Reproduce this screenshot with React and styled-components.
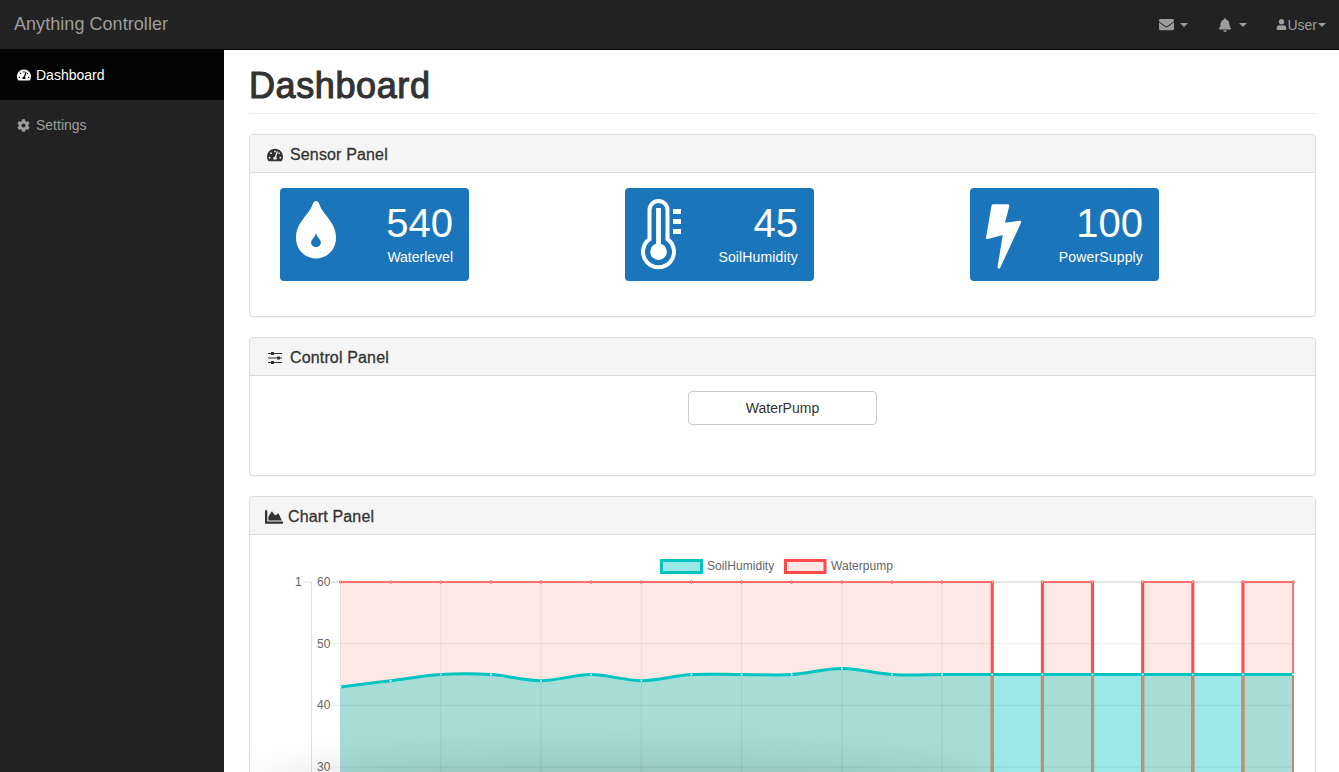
import React from "react";
import styled, { createGlobalStyle } from "styled-components";
import {
  FaBell,
  FaChartArea,
  FaCog,
  FaEnvelope,
  FaTachometerAlt,
  FaUser,
} from "react-icons/fa";

const GlobalStyle = createGlobalStyle`
  html, body {
    margin: 0;
    height: 100%;
    overflow: hidden;
    background: #fff;
  }
  body {
    font-family: "Liberation Sans", Arial, sans-serif;
    font-size: 14px;
    color: #333;
  }
  * { box-sizing: border-box; }
`;

const Page = styled.div`
  height: 100vh;
  display: flex;
  flex-direction: column;
  overflow: hidden;
  position: relative;
`;
const Navbar = styled.header`
  flex: none;
  height: 50px;
  background: #222;
  border-bottom: 1px solid #080808;
  display: flex;
  align-items: center;
  justify-content: space-between;
  padding: 0 13px 0 14px;
`;
const Brand = styled.div`
  font-size: 18px;
  letter-spacing: 0.05px;
  color: #9d9d9d;
`;
const NavRight = styled.div`
  display: flex;
  align-items: center;
  color: #9d9d9d;
`;
const NavItem = styled.div`
  display: flex;
  align-items: center;
  margin-left: ${(p) => p.$gap}px;
  svg { display: block; }
`;
const Caret = styled.span`
  width: 0;
  height: 0;
  margin-left: ${(p) => p.$gap}px;
  border-top: 4px solid #9d9d9d;
  border-left: 4px solid transparent;
  border-right: 4px solid transparent;
`;
const Body = styled.div`
  flex: 1;
  display: flex;
  min-height: 0;
`;
const Sidebar = styled.nav`
  flex: none;
  width: 224px;
  background: #222;
`;
const SideLink = styled.div`
  height: 50px;
  display: flex;
  align-items: center;
  gap: ${(p) => (p.$active ? 5 : 6)}px;
  padding-left: 17px;
  background: ${(p) => (p.$active ? "#040404" : "transparent")};
  color: ${(p) => (p.$active ? "#fff" : "#9d9d9d")};
`;
const Main = styled.main`
  flex: 1;
  padding: 0 23px 0 25px;
  min-width: 0;
`;
const PageHeader = styled.div`
  height: 64px;
  border-bottom: 1px solid #eee;
  margin-bottom: 20px;
  padding-top: 16px;
`;
const Title = styled.h1`
  margin: 0;
  font-size: 36px;
  line-height: 40px;
  font-weight: 400;
  letter-spacing: 0.6px;
  -webkit-text-stroke: 1.1px #333;
`;
const Panel = styled.section`
  background: #fff;
  border: 1px solid #ddd;
  border-radius: 4px;
  margin-bottom: 20px;
  box-shadow: 0 1px 1px rgba(0, 0, 0, 0.05);
`;
const PanelHeading = styled.div`
  height: 38px;
  background: #f5f5f5;
  border-bottom: 1px solid #ddd;
  border-radius: 3px 3px 0 0;
  display: flex;
  align-items: center;
  gap: ${(p) => p.$gap}px;
  padding: 2px 0 0 ${(p) => p.$pad}px;
  font-size: 16px;
  letter-spacing: 0.15px;
  -webkit-text-stroke: 0.3px #333;
  color: #333;
`;
const SensorBody = styled.div`
  padding: 15px 30px 35px;
  display: grid;
  grid-template-columns: repeat(3, 345px);
`;
const SensorCard = styled.div`
  width: 189px;
  height: 93px;
  background: #1b75bb;
  border-radius: 4px;
  color: #fff;
  display: flex;
  justify-content: space-between;
  padding: 11px 16px 0;
`;
const SensorIcon = styled.svg`
  display: block;
  fill: #fff;
  margin-top: ${(p) => p.$top}px;
`;
const SensorText = styled.div`
  text-align: right;
`;
const SensorValue = styled.div`
  font-size: 40px;
  line-height: 48px;
`;
const SensorLabel = styled.div`
  font-size: 14px;
  line-height: 20px;
  letter-spacing: ${(p) => p.$spacing}px;
`;
const ControlBody = styled.div`
  height: 99px;
  padding-top: 15px;
  display: flex;
  justify-content: center;
`;
const PumpButton = styled.button`
  width: 189px;
  height: 34px;
  background: #fff;
  border: 1px solid #ccc;
  border-radius: 4px;
  font: inherit;
  color: #333;
`;
const ChartBody = styled.div`
  height: 560px;
  svg { display: block; }
`;
const BottomShade = styled.div`
  position: absolute;
  left: 255px;
  bottom: -52px;
  width: 730px;
  height: 66px;
  border-radius: 50%;
  background: rgba(0, 0, 0, 0.11);
  filter: blur(20px);
  pointer-events: none;
`;

const OX = 250;
const OY = 535;
const xAt = (i) => 340.5 + i * 50.135;
const yAt = (v) => 582 + (60 - v) * 6.17;
const soil = [43, 44, 45, 45, 44, 45, 44, 45, 45, 45, 46, 45, 45, 45, 45, 45, 45, 45, 45, 45];

// same smoothing as the chart's bezier curve, offsets are panel relative
const soilPath = () => {
  const pts = soil.map((v, i) => [xAt(i) - OX, yAt(v) - OY]);
  let d = `M${pts[0][0]} ${pts[0][1]}`;
  for (let i = 1; i < pts.length; i++) {
    const p0 = pts[Math.max(i - 2, 0)];
    const p1 = pts[i - 1];
    const p2 = pts[i];
    const p3 = pts[Math.min(i + 1, pts.length - 1)];
    const c1x = p1[0] + (p2[0] - p0[0]) / 6;
    const c1y = p1[1] + (p2[1] - p0[1]) / 6;
    const c2x = p2[0] - (p3[0] - p1[0]) / 6;
    const c2y = p2[1] - (p3[1] - p1[1]) / 6;
    d += ` C${c1x} ${c1y} ${c2x} ${c2y} ${p2[0]} ${p2[1]}`;
  }
  return d;
};

const labelStyle = {
  fontFamily: "'Liberation Sans', Arial, sans-serif",
  fontSize: 12,
  letterSpacing: 0.05,
  fill: "#666",
};

const Chart = () => {
  const top = yAt(60) - OY;
  const bottom = 900 - OY;
  const left = xAt(0) - OX;
  const right = xAt(19) - OX;
  const line = soilPath();
  const area = `${line} L${right} ${bottom} L${left} ${bottom} Z`;
  const pumpBlocks = [
    [xAt(0), xAt(13)],
    [xAt(14), xAt(15)],
    [xAt(16), xAt(17)],
    [xAt(18), xAt(19)],
  ];
  const edges = [13, 14, 15, 16, 17, 18].map(xAt);
  const pumpRects = (fill) =>
    pumpBlocks.map(([a, b]) => (
      <rect key={a} x={a - OX} y={top} width={b - a} height={bottom - top} fill={fill} />
    ));
  const pumpEdges = (stroke) => (
    <g fill="none" stroke={stroke}>
      {edges.map((x) => (
        <line key={x} x1={x - OX} x2={x - OX} y1={top} y2={bottom} strokeWidth="3" />
      ))}
      <line x1={right} x2={right} y1={top} y2={bottom} strokeWidth="1.5" />
    </g>
  );
  return (
    <svg width="1065" height="560">
      <defs>
        <clipPath id="soil-area">
          <path d={area} />
        </clipPath>
      </defs>
      <line x1={331 - OX} x2={right + 1} y1={top} y2={top} stroke="#ccc" />
      {pumpRects("#fde8e5")}
      <path d={area} fill="#9be8e8" />
      <g clipPath="url(#soil-area)">{pumpRects("#a6ddd7")}</g>
      {/* grid */}
      <g stroke="rgba(0,0,0,0.07)" strokeWidth="1">
        {[50, 40, 30].map((v) => (
          <line key={v} x1={331 - OX} x2={right + 1} y1={yAt(v) - OY} y2={yAt(v) - OY} />
        ))}
        <line x1={304 - OX} x2={311.5 - OX} y1={top} y2={top} stroke="#e0e0e0" />
        <line x1={311.5 - OX} x2={311.5 - OX} y1={top} y2={bottom} stroke="#e0e0e0" />
        {Array.from({ length: 7 }, (_, i) => xAt(i * 2)).map((x) => (
          <line key={x} x1={x - OX} x2={x - OX} y1={top} y2={bottom} />
        ))}
      </g>
      {/* pump outline, brown where it runs under the soil area */}
      {pumpBlocks.map(([a, b]) => (
        <line key={a} x1={a - OX} x2={b - OX} y1={top} y2={top} stroke="#ff4a4a" strokeWidth="1.5" />
      ))}
      {pumpEdges("#ff4a4a")}
      <g clipPath="url(#soil-area)">{pumpEdges("#b8966f")}</g>
      <path d={line} fill="none" stroke="#00c4c0" strokeWidth="3" />
      {soil.map((v, i) => (
        <circle key={i} cx={xAt(i) - OX} cy={yAt(v) - OY} r="1" fill="#fff" />
      ))}
      {soil.map((_, i) => (
        <circle key={i} cx={xAt(i) - OX} cy={top} r="1.2" fill="#fde8e5" stroke="#ff4a4a" strokeWidth="1" />
      ))}
      {/* axes */}
      <text x={295 - OX} y={top + 4} style={labelStyle}>1</text>
      {[60, 50, 40, 30].map((v) => (
        <text key={v} x={317 - OX} y={yAt(v) - OY + 4} style={labelStyle}>{v}</text>
      ))}
      {/* legend */}
      <rect x={661.5 - OX} y={560.5 - OY} width="40" height="12" fill="#9be8e8" stroke="#00c4c0" strokeWidth="3" />
      <text x={707 - OX} y={570 - OY} style={labelStyle}>SoilHumidity</text>
      <rect x={785.5 - OX} y={560.5 - OY} width="39.500" height="12" fill="#fde8e5" stroke="#ff4a4a" strokeWidth="3" />
      <text x={831 - OX} y={570 - OY} style={labelStyle}>Waterpump</text>
    </svg>
  );
};

const DropIcon = () => (
  <SensorIcon $top={2} width="40" height="58" viewBox="0 0 40 58">
    <path
      fillRule="evenodd"
      d="M20 0c1.600 0 2.600 1.200 3.200 3 1.400 4.400 4.400 8.200 8 12.800C35.600 21.500 40 27.500 40 37c0 11.600-9 20.500-20 20.500S0 48.600 0 37c0-9.500 4.400-15.500 8.800-21.200 3.600-4.600 6.600-8.400 8-12.800C17.400 1.200 18.400 0 20 0zM20 32c-.6 2.400-1.800 4-3 5.600-1 1.300-1.900 2.500-1.900 3.700 0 2.700 2.200 4.900 4.900 4.900s4.900-2.200 4.900-4.900c0-1.200-.9-2.400-1.900-3.700-1.200-1.600-2.400-3.200-3-5.600z"
    />
  </SensorIcon>
);

const ThermometerIcon = () => (
  <SensorIcon $top={0} width="41" height="71" viewBox="0 0 41 71">
    <path
      d="M8.500 40.100V11A9 9 0 0 1 26.500 11V40.100A15.500 15.500 0 1 1 8.500 40.100Z"
      fill="none"
      stroke="#fff"
      strokeWidth="4"
    />
    <circle cx="17.500" cy="52.700" r="8.300" />
    <rect x="15.100" y="9" width="4.800" height="41" />
    <rect x="32" y="10" width="8" height="5" />
    <rect x="32" y="20" width="8" height="5" />
    <rect x="32" y="30" width="8" height="5" />
  </SensorIcon>
);

const BoltIcon = () => (
  <SensorIcon $top={5} width="36" height="66" viewBox="0 0 36 66">
    <path d="M5.500 1.800C5.700.8 6.400.2 7.300.2H22c1 0 1.600 1 1.300 1.900L19 18.700l14.700-1.900c1 -.1 1.800.8 1.400 1.800L14.200 63.800c-.7 1.500-3 .8-2.700-.8l5.300-31.900L1.800 35C.7 35.300-.2 34.300.1 33.300L5.500 1.800z" />
  </SensorIcon>
);

const SlidersIcon = () => (
  <svg width="14" height="12" viewBox="0 0 14 12" fill="#333">
    <rect x="0" y="1" width="14" height="1" />
    <rect x="3" y="0" width="3" height="3" />
    <rect x="0" y="5.500" width="14" height="1" />
    <rect x="9" y="4.500" width="3" height="3" />
    <rect x="0" y="10" width="14" height="1" />
    <rect x="3" y="9" width="3" height="3" />
  </svg>
);

const sensors = [
  { value: 540, label: "Waterlevel", icon: <DropIcon />, spacing: 0 },
  { value: 45, label: "SoilHumidity", icon: <ThermometerIcon />, spacing: 0.15 },
  { value: 100, label: "PowerSupply", icon: <BoltIcon />, spacing: 0.15 },
];

export default function App() {
  return (
    <Page>
      <GlobalStyle />
      <Navbar>
        <Brand>Anything Controller</Brand>
        <NavRight>
          <NavItem $gap={0}>
            <FaEnvelope size={15} />
            <Caret $gap={6} />
          </NavItem>
          <NavItem $gap={30}>
            <FaBell size={14} />
            <Caret $gap={7} />
          </NavItem>
          <NavItem $gap={29}>
            <FaUser size={11} />
            User
            <Caret $gap={1} />
          </NavItem>
        </NavRight>
      </Navbar>
      <Body>
        <Sidebar>
          <SideLink $active>
            <FaTachometerAlt size={14} />
            Dashboard
          </SideLink>
          <SideLink>
            <FaCog size={13} />
            Settings
          </SideLink>
        </Sidebar>
        <Main>
          <PageHeader>
            <Title>Dashboard</Title>
          </PageHeader>
          <Panel>
            <PanelHeading $gap={7} $pad={17}>
              <FaTachometerAlt size={16} />
              Sensor Panel
            </PanelHeading>
            <SensorBody>
              {sensors.map((s) => (
                <SensorCard key={s.label}>
                  {s.icon}
                  <SensorText>
                    <SensorValue>{s.value}</SensorValue>
                    <SensorLabel $spacing={s.spacing}>{s.label}</SensorLabel>
                  </SensorText>
                </SensorCard>
              ))}
            </SensorBody>
          </Panel>
          <Panel>
            <PanelHeading $gap={8} $pad={18}>
              <SlidersIcon />
              Control Panel
            </PanelHeading>
            <ControlBody>
              <PumpButton>WaterPump</PumpButton>
            </ControlBody>
          </Panel>
          <Panel>
            <PanelHeading $gap={5} $pad={15}>
              <FaChartArea size={18} />
              Chart Panel
            </PanelHeading>
            <ChartBody>
              <Chart />
            </ChartBody>
          </Panel>
        </Main>
      </Body>
      <BottomShade />
    </Page>
  );
}
